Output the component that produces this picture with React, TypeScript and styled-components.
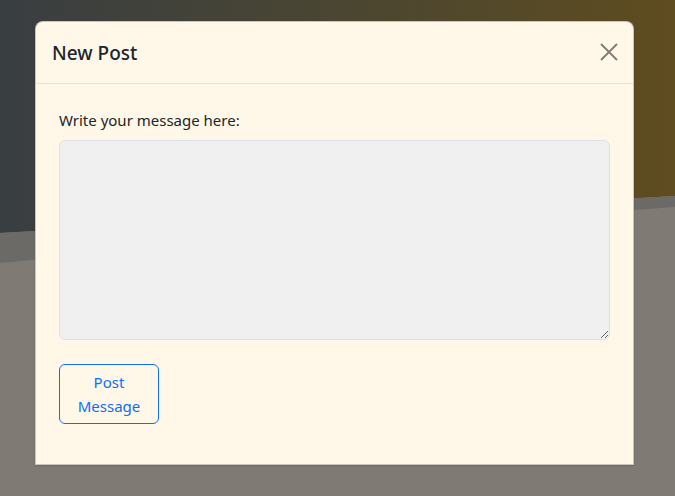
import styled, { createGlobalStyle } from 'styled-components';

const GlobalStyle = createGlobalStyle`
  html, body {
    margin: 0;
    padding: 0;
    background: #7f7a74;
  }
  body {
    font-family: "Segoe UI", "Noto Sans", "Liberation Sans", sans-serif;
    color: #212529;
  }
  * {
    box-sizing: border-box;
  }
`;

const Stage = styled.div`
  position: relative;
  width: 675px;
  height: 496px;
  overflow: hidden;
  padding: 21px 0 0 35px;
`;

const Scenery = styled.svg`
  position: absolute;
  inset: 0;
  width: 100%;
  height: 100%;
`;

const Modal = styled.div`
  position: relative;
  width: 599px;
  background: #fff7e8;
  border: 1px solid rgba(0, 0, 0, 0.2);
  border-radius: 8px 8px 0 0;
  box-shadow: 0 1px 2px rgba(0, 0, 0, 0.15);
`;

const Header = styled.div`
  display: flex;
  align-items: center;
  justify-content: space-between;
  padding: 16px 14px 15px 16px;
  border-bottom: 1px solid #dee2e6;
`;

const Title = styled.h5`
  margin: 0;
  font-size: 19px;
  line-height: 30px;
  font-weight: 500;
`;

const CloseButton = styled.button`
  display: flex;
  align-items: center;
  justify-content: center;
  width: 20px;
  height: 20px;
  padding: 0;
  border: 0;
  background: transparent;
  color: #807b74;
  cursor: pointer;
  margin-top: -2px;
`;

const Body = styled.div`
  padding: 24px 23px 40px 23px;
`;

const Label = styled.label`
  display: block;
  font-size: 15px;
  line-height: 24px;
  margin-bottom: 8px;
`;

const MessageBox = styled.textarea`
  display: block;
  width: 100%;
  height: 200px;
  background: #f0f0f0;
  border: 1px solid #dee2e6;
  border-radius: 6px;
  resize: vertical;
  font: inherit;
  padding: 6px 12px;
  margin-bottom: 24px;
  outline: none;
`;

const OutlineButton = styled.button`
  display: block;
  width: 100px;
  padding: 5px 12px;
  font-family: inherit;
  font-size: 15px;
  line-height: 24px;
  color: #0d6efd;
  background: transparent;
  border: 1px solid #0d6efd;
  border-radius: 6px;
  cursor: pointer;
`;

export default function App() {
  return (
    <>
      <GlobalStyle />
      <Stage>
        <Scenery viewBox="0 0 675 496" preserveAspectRatio="none">
          <defs>
            <linearGradient id="sky" x1="0" y1="0" x2="1" y2="0">
              <stop offset="0" stopColor="#393e41" />
              <stop offset="0.5" stopColor="#4a4632" />
              <stop offset="1" stopColor="#5f4c1f" />
            </linearGradient>
          </defs>
          <rect x="0" y="0" width="675" height="496" fill="#7f7a74" />
          <polygon points="0,0 675,0 675,196 0,233" fill="url(#sky)" />
          <polygon points="0,233 675,196 675,207 330,232 0,263" fill="#6c6a66" />
        </Scenery>
        <Modal>
          <Header>
            <Title>New Post</Title>
            <CloseButton aria-label="Close">
              <svg width="20" height="20" viewBox="0 0 20 20">
                <path d="M2 2 L18 18 M18 2 L2 18" stroke="currentColor" strokeWidth="1.8" />
              </svg>
            </CloseButton>
          </Header>
          <Body>
            <Label htmlFor="msg">Write your message here:</Label>
            <MessageBox id="msg" />
            <OutlineButton>Post Message</OutlineButton>
          </Body>
        </Modal>
      </Stage>
    </>
  );
}
